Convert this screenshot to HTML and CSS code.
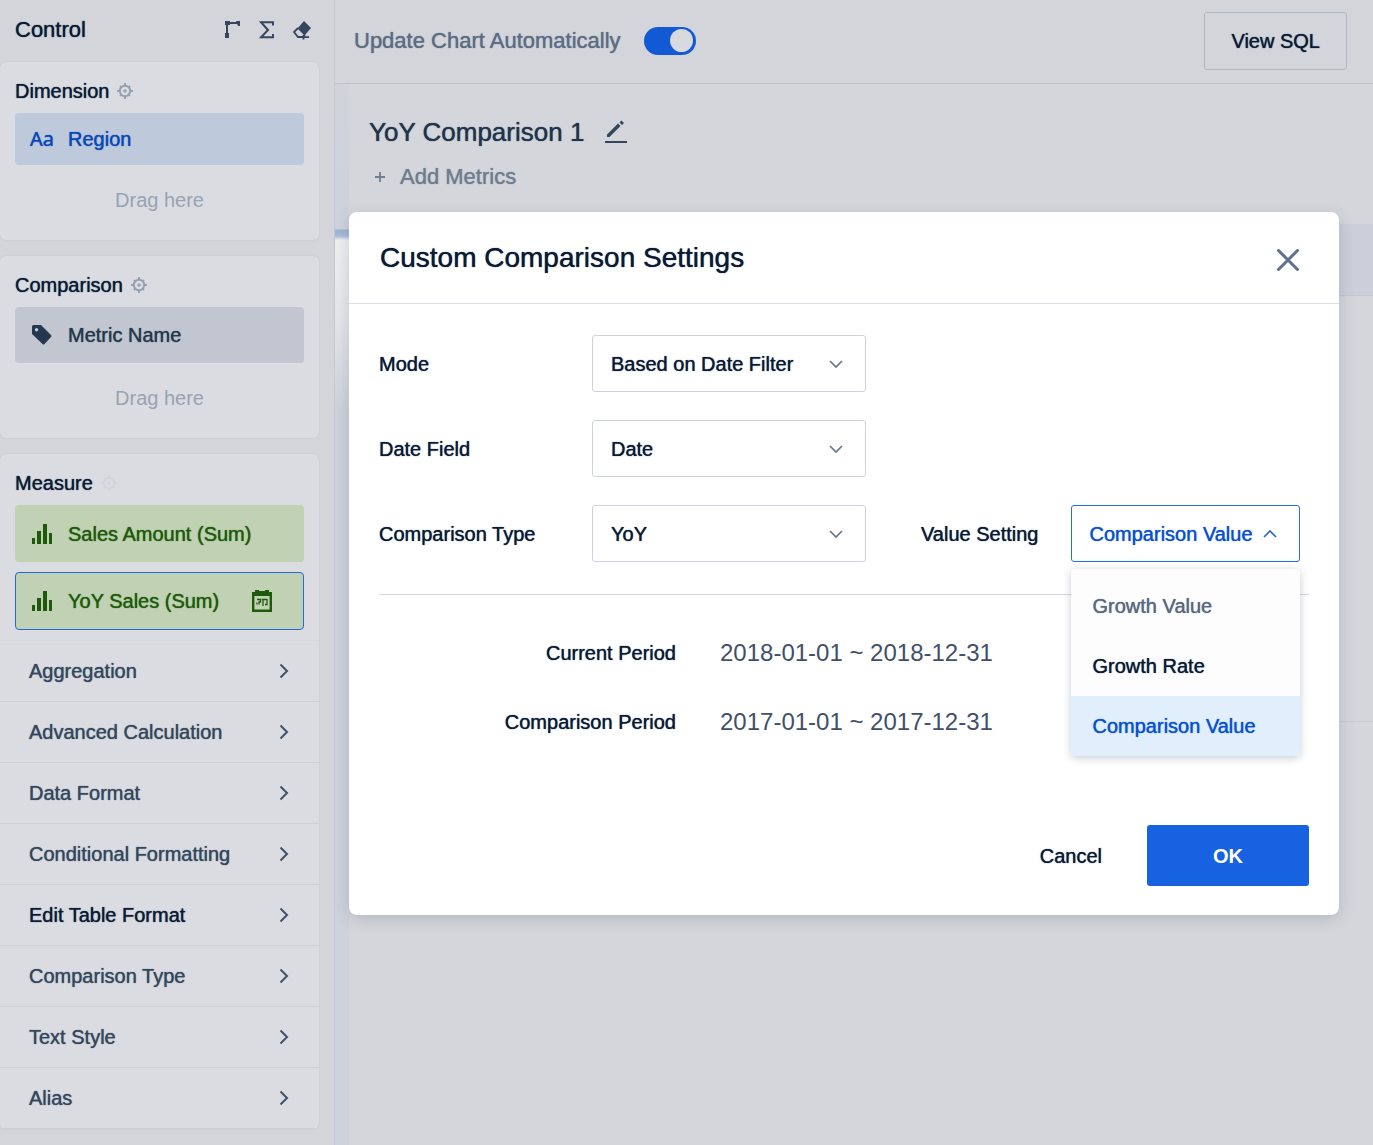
FILE: index.html
```html
<!DOCTYPE html>
<html lang="en">
<head>
    <meta charset="UTF-8">
    <meta name="viewport" content="width=device-width, initial-scale=1.0">
    <link rel="stylesheet" href="styles.css">
    <title>YoY Comparison</title>
</head>
<body>

    <svg class="sprite" aria-hidden="true">
        <symbol id="gear" viewBox="0 0 16 16">
            <circle cx="8" cy="8" r="5.200" fill="none" stroke="currentColor" stroke-width="2"/>
            <circle cx="8" cy="8" r="1.700" fill="currentColor"/>
            <path d="M8 0v3M8 13v3M0 8h3M13 8h3M3 3l1.500 1.500M11.500 11.500L13 13M3 13l1.500-1.500M11.500 4.500L13 3" stroke="currentColor" stroke-width="2"/>
        </symbol>
        <symbol id="bars" viewBox="0 0 20 20">
            <path d="M0 14h3v6H0zM5 7h4v13H5zM11 0h4v20h-4zM17 9h3v11h-3z" fill="currentColor"/>
        </symbol>
        <symbol id="right" viewBox="0 0 10 16">
            <path d="M1.500 1.500L8 8l-6.500 6.500" fill="none" stroke="currentColor" stroke-width="2"/>
        </symbol>
        <symbol id="down" viewBox="0 0 14 8">
            <path d="M1 1l6 6 6-6" fill="none" stroke="currentColor" stroke-width="1.7"/>
        </symbol>
    </svg>

    <div class="page">
        <aside class="sidebar">
            <div class="sidebar-header">
                <h2>Control</h2>
                <div class="tools">
                    <button type="button" aria-label="Swap axes">
                        <svg width="16" height="18" viewBox="0 0 16 18"><path d="M2 13V2h11" fill="none" stroke="currentColor" stroke-width="2"/><path d="M0 0h5v4H0zM0 12h4v5H0zM11 0h4v5h-2z" fill="currentColor"/></svg>
                    </button>
                    <button type="button" aria-label="Totals">
                        <svg width="16" height="18" viewBox="0 0 16 18"><path d="M14 4.500V1.200H2L9 9l-7 7.300h12V13" fill="none" stroke="currentColor" stroke-width="2"/></svg>
                    </button>
                    <button type="button" aria-label="Clear">
                        <svg width="18" height="19" viewBox="0 0 18 19"><path d="M11 0l7 7-6.500 7.500L4.500 7.500z" fill="currentColor"/><path d="M5 7l-4 4 4 5h5l2-2.500M7 16.200h9M10.500 14v4.500" fill="none" stroke="currentColor" stroke-width="1.800"/></svg>
                    </button>
                </div>
            </div>

            <section class="card">
                <h3>Dimension <svg class="gear"><use href="#gear"/></svg></h3>
                <button type="button" class="chip chip-dimension"><span class="chip-icon chip-aa">Aa</span>Region</button>
                <p class="drag">Drag here</p>
            </section>

            <section class="card">
                <h3>Comparison <svg class="gear"><use href="#gear"/></svg></h3>
                <button type="button" class="chip chip-comparison">
                    <span class="chip-icon"><svg width="20" height="20" viewBox="0 0 20 20"><path fill-rule="evenodd" d="M0 1.500Q0 0 1.500 0H9l10 10q1 1 0 2l-6.500 7q-1 1-2 0L0 9zM4.500 3a1.700 1.700 0 1 0 .1 0z" fill="currentColor"/></svg></span>Metric Name
                </button>
                <p class="drag">Drag here</p>
            </section>

            <section class="card card-measure">
                <h3>Measure <svg class="gear gear-faint"><use href="#gear"/></svg></h3>
                <button type="button" class="chip chip-measure">
                    <span class="chip-icon"><svg width="20" height="20"><use href="#bars"/></svg></span>Sales Amount (Sum)
                </button>
                <button type="button" class="chip chip-measure selected">
                    <span class="chip-icon"><svg width="20" height="20"><use href="#bars"/></svg></span>YoY Sales (Sum)
                    <svg class="calendar" width="20" height="22" viewBox="0 0 20 22"><path d="M1.200 4h17.600v16.800H1.200z" fill="none" stroke="currentColor" stroke-width="2.400"/><path d="M0 2h3V0h4v1h6V0h4v2h3v4H0z" fill="currentColor"/><path d="M5 9.500h3.500V12H7v2.500M11 16V9.500h4v5h-2M11 9.500H9.800M5 12.500v2" fill="none" stroke="currentColor" stroke-width="1.300"/></svg>
                </button>

                <ul class="options">
                    <li><button type="button">Aggregation <svg><use href="#right"/></svg></button></li>
                    <li><button type="button">Advanced Calculation <svg><use href="#right"/></svg></button></li>
                    <li><button type="button">Data Format <svg><use href="#right"/></svg></button></li>
                    <li><button type="button">Conditional Formatting <svg><use href="#right"/></svg></button></li>
                    <li><button type="button" class="active">Edit Table Format <svg><use href="#right"/></svg></button></li>
                    <li><button type="button">Comparison Type <svg><use href="#right"/></svg></button></li>
                    <li><button type="button">Text Style <svg><use href="#right"/></svg></button></li>
                    <li><button type="button">Alias <svg><use href="#right"/></svg></button></li>
                </ul>
            </section>
        </aside>

        <main>
            <div class="topbar">
                <label for="autoUpdate">Update Chart Automatically</label>
                <input type="checkbox" class="switch" id="autoUpdate" checked>
                <button type="button" class="sql">View SQL</button>
            </div>
            <div class="chart">
                <div class="gutter"></div>
                <div class="panel">
                    <div class="chart-title">
                        <h1>YoY Comparison 1</h1>
                        <button type="button" aria-label="Rename">
                            <svg width="22" height="24" viewBox="0 0 22 24"><path d="M2 14.500L13 3.500l2.500 2.500L4.500 17H2zM14.500 2.500l2-2L19 3l-2 2z" fill="currentColor"/><path d="M0 22h22" stroke="currentColor" stroke-width="2"/></svg>
                        </button>
                    </div>
                    <button type="button" class="add"><svg width="12" height="12" viewBox="0 0 12 12"><path d="M6 1v10M1 6h10" stroke="currentColor" stroke-width="1.800"/></svg>Add Metrics</button>
                    <div class="table-head"></div>
                    <div class="table-body"></div>
                </div>
            </div>
        </main>
    </div>

    <div class="overlay">
        <div class="modal" role="dialog" aria-labelledby="modalTitle">
            <div class="modal-header">
                <h2 id="modalTitle">Custom Comparison Settings</h2>
                <button type="button" aria-label="Close"><svg width="22" height="22" viewBox="0 0 22 22"><path d="M1.500 1.500l19 19M20.500 1.500l-19 19" stroke="currentColor" stroke-width="3" stroke-linecap="round"/></svg></button>
            </div>

            <form class="modal-body">
                <div class="row">
                    <label for="mode">Mode</label>
                    <div class="select"><select id="mode"><option>Based on Date Filter</option></select><svg><use href="#down"/></svg></div>
                </div>
                <div class="row">
                    <label for="dateField">Date Field</label>
                    <div class="select"><select id="dateField"><option>Date</option></select><svg><use href="#down"/></svg></div>
                </div>
                <div class="row">
                    <label for="compType">Comparison Type</label>
                    <div class="select"><select id="compType"><option>YoY</option></select><svg><use href="#down"/></svg></div>
                    <label for="valueSetting" class="value-label">Value Setting</label>
                    <div class="select open">
                        <select id="valueSetting"><option>Comparison Value</option><option>Growth Value</option><option>Growth Rate</option></select>
                        <svg><use href="#down"/></svg>
                        <div class="menu">
                            <button type="button" class="muted">Growth Value</button>
                            <button type="button">Growth Rate</button>
                            <button type="button" class="current">Comparison Value</button>
                        </div>
                    </div>
                </div>

                <dl class="periods">
                    <dt>Current Period</dt>
                    <dd>2018-01-01 ~ 2018-12-31</dd>
                    <dt>Comparison Period</dt>
                    <dd>2017-01-01 ~ 2017-12-31</dd>
                </dl>

                <div class="actions">
                    <button type="button" class="cancel">Cancel</button>
                    <button type="button" class="ok">OK</button>
                </div>
            </form>
        </div>
    </div>

</body>
</html>
```
FILE: styles.css
```css
* {
    box-sizing: border-box;
}

body {
    font-family: "Liberation Sans", Arial, sans-serif;
    font-size: 20px;
    line-height: 24px;
    margin: 0;
    color: #0b1b36;
    background-color: #d3d5db;
    text-shadow: 0 0 1px currentColor;
}

h1, h2, h3, p, ul, dl, dd {
    margin: 0;
    padding: 0;
    font-weight: normal;
}

button, select {
    font: inherit;
    color: inherit;
    text-shadow: inherit;
    background: none;
    border: none;
    padding: 0;
    margin: 0;
    cursor: pointer;
}

svg {
    display: block;
    flex: none;
}

.sprite {
    position: absolute;
    width: 0;
    height: 0;
}

.page {
    display: flex;
    min-height: 100vh;
}

/* sidebar */
.sidebar {
    width: 335px;
    flex: none;
    padding: 0 15px 15px 0;
    border-right: 1px solid #c3c9d3;
}

.sidebar-header {
    display: flex;
    align-items: center;
    justify-content: space-between;
    height: 62px;
    padding: 0 8px 2px 15px;
}

.sidebar-header h2 {
    font-size: 22px;
}

.tools {
    display: flex;
    align-items: center;
    gap: 18px;
    color: #34475f;
}

.card {
    margin-bottom: 16px;
    padding: 17px 15px 28px;
    background-color: #dbdce1;
    border-radius: 6px;
    box-shadow: 0 0 2px rgba(120, 135, 160, 0.2);
}

.card h3 {
    display: flex;
    align-items: center;
    gap: 8px;
    margin-bottom: 10px;
    font-size: 20px;
}

.gear {
    width: 16px;
    height: 16px;
    color: #95a1b2;
}

.gear-faint {
    opacity: 0.1;
}

.chip {
    display: flex;
    align-items: center;
    width: 100%;
    padding: 14px 15px;
    border-radius: 4px;
    text-align: left;
}

.chip-icon {
    width: 38px;
    padding-left: 2px;
}

.chip-aa {
    font-family: "Noto Sans", sans-serif;
    padding-left: 0;
}

.chip-dimension {
    background-color: #bec9dc;
    color: #0a47b5;
}

.chip-comparison {
    padding: 16px 15px;
    background-color: #c1c6d0;
    color: #263850;
}

.chip-measure {
    height: 57px;
    margin-bottom: 10px;
    background-color: #c0d1b4;
    color: #1f5a0c;
}

.chip-measure.selected {
    height: 58px;
    border: 1px solid #2468dc;
    padding: 0 14px;
}

.calendar {
    margin-left: auto;
    margin-right: 17px;
}

.drag {
    margin-top: 23px;
    text-align: center;
    color: #99a3b2;
    text-shadow: none;
}

.card-measure {
    margin-bottom: 0;
    padding: 17px 0 0;
}

.card-measure h3 {
    padding: 0 15px;
}

.card-measure .chip {
    width: calc(100% - 30px);
    margin-left: 15px;
}

.options {
    list-style: none;
}

.options li {
    border-bottom: 1px solid #cdd0d9;
}

.options li:first-child {
    border-top: 1px solid #d3d8d8;
}

.options button {
    display: flex;
    align-items: center;
    justify-content: space-between;
    width: 100%;
    height: 60px;
    padding: 0 30px 0 29px;
    color: #35475f;
}

.options svg {
    width: 10px;
    height: 16px;
    color: #40526a;
}

.options .active {
    color: #0b1b36;
}

/* chart area */
main {
    flex: 1;
    display: flex;
    flex-direction: column;
}

.topbar {
    display: flex;
    align-items: center;
    height: 84px;
    padding: 0 26px 2px 19px;
    border-bottom: 1px solid #bcc3cd;
}

.topbar label {
    font-size: 22px;
    color: #5c6c83;
}

.switch {
    appearance: none;
    display: flex;
    align-items: center;
    justify-content: flex-end;
    width: 52px;
    height: 28px;
    margin: 0 0 0 23px;
    padding: 0 3px;
    border-radius: 14px;
    background-color: #125ad4;
    cursor: pointer;
}

.switch::before {
    content: "";
    width: 23px;
    height: 23px;
    border-radius: 50%;
    background-color: #d8dae0;
}

.sql {
    height: 58px;
    margin-left: auto;
    padding: 0 26px;
    border: 1px solid #adb6c3;
    border-radius: 3px;
}

.chart {
    flex: 1;
    display: flex;
}

.gutter {
    width: 14px;
    background: linear-gradient(#d0d3da 0, #cdd2db 145px, #9db3d0 146px, #a9bdd6 152px, #eeeff1 156px, #e6e7ea 230px, #ced2da 325px, #ced2da 100%);
}

.panel {
    flex: 1;
    padding-top: 34px;
    background-color: #d4d6db;
}

.chart-title {
    display: flex;
    align-items: center;
    gap: 21px;
    padding-left: 20px;
    color: #34475f;
}

.chart-title h1 {
    font-size: 26px;
    line-height: 28px;
    color: #22334c;
}

.add {
    display: flex;
    align-items: center;
    gap: 14px;
    margin: 19px 0 35px 25px;
    font-size: 22px;
    color: #6f7d8f;
}

.table-head {
    height: 72px;
    background-color: #cbcfda;
    border-bottom: 1px solid #c1c6d0;
}

.table-body {
    height: 426px;
    border-bottom: 1px solid #c9ccd4;
}

/* dialog */
.overlay {
    position: absolute;
    top: 0;
    left: 0;
    right: 0;
    padding: 212px 34px 0 349px;
}

.modal {
    background-color: #fff;
    border-radius: 8px;
    box-shadow: 0 4px 16px rgba(60, 70, 90, 0.2);
}

.modal-header {
    display: flex;
    align-items: center;
    justify-content: space-between;
    height: 92px;
    padding: 0 40px 0 31px;
    border-bottom: 1px solid #dbe0e8;
}

.modal-header h2 {
    font-size: 28px;
}

.modal-header button {
    padding-top: 4px;
    color: #60718c;
}

.modal-body {
    padding: 31px 30px 29px;
}

.row {
    display: flex;
    align-items: center;
    margin-bottom: 28px;
}

.row label {
    width: 213px;
    flex: none;
}

.row .value-label {
    width: auto;
    margin: 0 32px 0 55px;
}

.select {
    position: relative;
    width: 274px;
}

.select select {
    appearance: none;
    display: block;
    width: 100%;
    height: 57px;
    padding: 0 40px 0 18px;
    border: 1px solid #ccd3de;
    border-radius: 3px;
    background-color: #fff;
}

.select > svg {
    position: absolute;
    top: 25px;
    right: 23px;
    width: 14px;
    height: 8px;
    color: #66758d;
    pointer-events: none;
}

.select.open {
    width: 229px;
}

.open select {
    border-color: #2370e6;
    padding-right: 30px;
    color: #0b4fcf;
}

.open > svg {
    color: #2a66cf;
    transform: rotate(180deg);
}

.menu {
    position: absolute;
    top: 64px;
    left: 0;
    width: 100%;
    padding-top: 7px;
    background-color: #fdfdfe;
    border-radius: 4px;
    box-shadow: 0 2px 8px rgba(40, 50, 80, 0.25);
    overflow: hidden;
    z-index: 1;
}

.menu button {
    display: block;
    width: 100%;
    height: 60px;
    padding: 0 22px;
    text-align: left;
}

.menu .muted {
    color: #5a6880;
}

.menu .current {
    background-color: #e1effc;
    color: #0b4fcf;
}

.periods {
    display: grid;
    grid-template-columns: 297px 1fr;
    column-gap: 44px;
    row-gap: 45px;
    margin-top: 32px;
    padding: 46px 0 91px;
    border-top: 1px solid #d3d8e2;
}

.periods dt {
    text-align: right;
}

.periods dd {
    font-size: 24px;
    color: #40506a;
    text-shadow: none;
}

.actions {
    display: flex;
    align-items: center;
    justify-content: flex-end;
    gap: 45px;
}

.ok {
    width: 162px;
    height: 61px;
    border-radius: 3px;
    background-color: #1662e0;
    color: #fff;
    font-weight: bold;
    text-shadow: none;
}
```
